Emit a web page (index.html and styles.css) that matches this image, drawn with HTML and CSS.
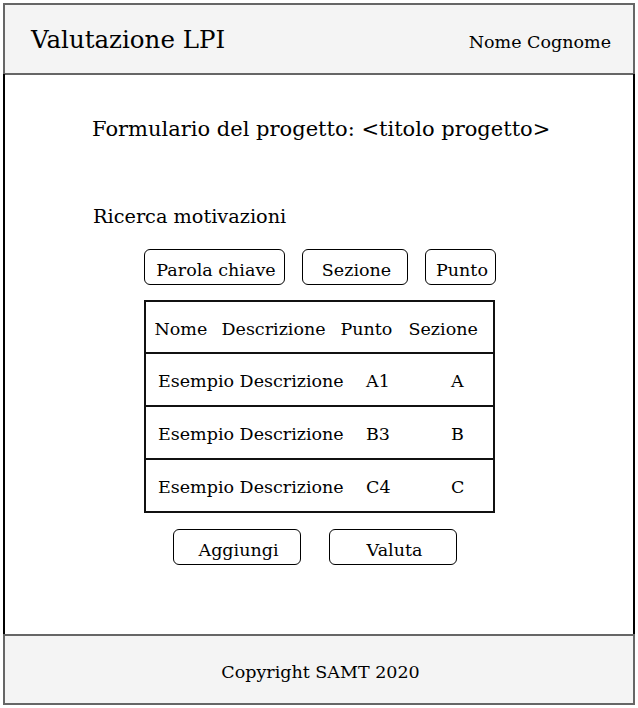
FILE: index.html
```html
<!DOCTYPE html>
<html lang="it">
<head>
<meta charset="utf-8">
<title>Valutazione LPI</title>
<link rel="stylesheet" href="styles.css">
</head>
<body>
<div class="page">
  <header class="top">
    <div class="brand">Valutazione LPI</div>
    <div class="user">Nome Cognome</div>
  </header>
  <main class="main">
    <h1 class="form-title">Formulario del progetto: &lt;titolo progetto&gt;</h1>
    <h2 class="section-title">Ricerca motivazioni</h2>
    <div class="filters">
      <button class="btn btn-key">Parola chiave</button>
      <button class="btn btn-sec">Sezione</button>
      <button class="btn btn-pt">Punto</button>
    </div>
    <div class="table">
      <div class="row head">
        <span class="h-nome">Nome</span>
        <span class="h-desc">Descrizione</span>
        <span class="h-punto">Punto</span>
        <span class="h-sez">Sezione</span>
      </div>
      <div class="row">
        <span class="c-desc">Esempio Descrizione</span>
        <span class="c-punto">A1</span>
        <span class="c-sez">A</span>
      </div>
      <div class="row">
        <span class="c-desc">Esempio Descrizione</span>
        <span class="c-punto">B3</span>
        <span class="c-sez">B</span>
      </div>
      <div class="row">
        <span class="c-desc">Esempio Descrizione</span>
        <span class="c-punto">C4</span>
        <span class="c-sez">C</span>
      </div>
    </div>
    <div class="actions">
      <button class="btn btn-act">Aggiungi</button>
      <button class="btn btn-act">Valuta</button>
    </div>
  </main>
  <footer class="bottom">Copyright SAMT 2020</footer>
</div>
</body>
</html>
```

FILE: styles.css
```css
* { box-sizing: border-box; }
html, body { margin: 0; padding: 0; background: #fff; }
body { font-family: "DejaVu Serif", serif; color: #000; }

.page {
  width: 632px;
  margin: 3px 0 0 3px;
}

.top {
  height: 72px;
  background: #f4f4f4;
  border: 2px solid #666;
  display: flex;
  align-items: center;
  justify-content: space-between;
  padding: 0 22px 0 26px;
}
.brand { font-size: 24.5px; line-height: 28px; margin-top: 2px; }
.user { font-size: 17.5px; line-height: 20px; margin-top: 5px; }

.main {
  height: 560px;
  border-left: 2px solid #000;
  border-right: 2px solid #000;
  margin: -1px 0;
  padding-top: 42px;
}
.form-title {
  margin: 0 0 0 87px;
  font-size: 21px;
  line-height: 26px;
  font-weight: normal;
}
.section-title {
  margin: 63px 0 0 88px;
  font-size: 19.3px;
  line-height: 24px;
  font-weight: normal;
}

.btn {
  font-family: "DejaVu Serif", serif;
  font-size: 17.5px;
  color: #000;
  background: #fff;
  border: 1.6px solid #000;
  border-radius: 6px;
  height: 36px;
  padding: 5px 0 0 3px;
}
.filters {
  display: flex;
  margin: 20px 0 0 139px;
  gap: 17px;
}
.btn-key { width: 141px; }
.btn-sec { width: 106px; }
.btn-pt { width: 71px; }

.table {
  margin: 15px 0 0 138.5px;
  width: 351.5px;
  border: 2px solid #111;
}
.row {
  height: 53px;
  display: flex;
  align-items: center;
  font-size: 17.5px;
  border-top: 2px solid #111;
  padding-top: 3px;
}
.row.head { border-top: none; height: 50px; padding-top: 3px; }
.h-nome { margin-left: 9px; width: 67px; }
.h-desc { width: 119px; }
.h-punto { width: 68px; }
.c-desc { margin-left: 12.5px; width: 208px; }
.c-punto { width: 85px; }

.actions {
  display: flex;
  margin: 16px 0 0 168px;
  gap: 28px;
}
.btn-act { width: 128px; }

.bottom {
  height: 71px;
  background: #f4f4f4;
  border: 2px solid #666;
  display: flex;
  align-items: center;
  justify-content: center;
  font-size: 17.5px;
  padding: 4px 0 0 3px;
  margin-top: 1px;
}
```
